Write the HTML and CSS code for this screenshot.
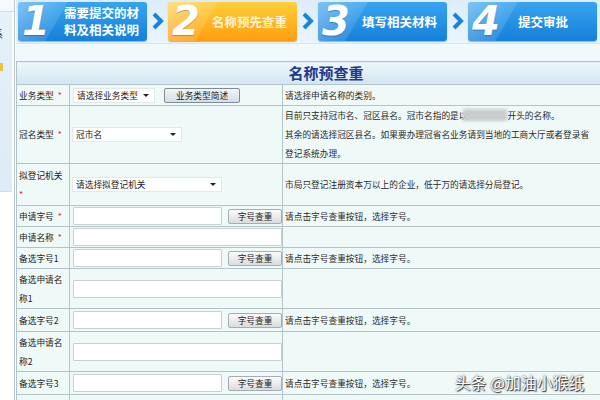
FILE: index.html
```html
<!DOCTYPE html>
<html lang="zh-CN">
<head>
  <meta charset="UTF-8" />
  <title>名称预查重</title>
  <link rel="stylesheet" href="styles.css">
</head>
<body>
  <div class="page">
    <!-- left menu (mostly cut off) -->
    <div class="side">
      <div class="side-top"></div>
      <div class="side-menu">
        <span class="side-text">系</span>
        <span class="side-mark"></span>
      </div>
    </div>

    <div class="main">
      <!-- steps -->
      <div class="steps">
        <div class="step">
          <span class="num">1</span>
          <span class="label two-line">需要提交的材<br>料及相关说明</span>
        </div>
        <svg class="arrow" width="14" height="18" viewBox="0 0 14 18"><polyline points="3,2 10,9 3,16" fill="none" stroke="#1a84da" stroke-width="4"/></svg>
        <div class="step current">
          <span class="num">2</span>
          <span class="label">名称预先查重</span>
        </div>
        <svg class="arrow" width="14" height="18" viewBox="0 0 14 18"><polyline points="3,2 10,9 3,16" fill="none" stroke="#1a84da" stroke-width="4"/></svg>
        <div class="step">
          <span class="num">3</span>
          <span class="label">填写相关材料</span>
        </div>
        <svg class="arrow" width="14" height="18" viewBox="0 0 14 18"><polyline points="3,2 10,9 3,16" fill="none" stroke="#1a84da" stroke-width="4"/></svg>
        <div class="step">
          <span class="num">4</span>
          <span class="label last">提交审批</span>
        </div>
      </div>

      <div class="content">
        <table class="form">
          <colgroup>
            <col class="c-label">
            <col class="c-field">
            <col>
          </colgroup>
          <tr class="title-row">
            <th colspan="3">名称预查重</th>
          </tr>
          <tr class="r-s">
            <td>业务类型 <span class="req">*</span></td>
            <td>
              <div class="field">
                <div class="select sel-type">请选择业务类型<span class="caret"></span></div>
                <button class="btn btn-desc">业务类型简述</button>
              </div>
            </td>
            <td class="hint">请选择申请名称的类别。</td>
          </tr>
          <tr class="r-xl">
            <td>冠名类型 <span class="req">*</span></td>
            <td>
              <div class="field">
                <div class="select sel-crown">冠市名<span class="caret"></span></div>
              </div>
            </td>
            <td class="hint">
              目前只支持冠市名、冠区县名。冠市名指的是以<span class="blur"></span>开头的名称。<br>
              其余的请选择冠区县名。如果要办理冠省名业务请到当地的工商大厅或者登录省<br>
              登记系统办理。
            </td>
          </tr>
          <tr class="r-l">
            <td>拟登记机关<br><span class="req first">*</span></td>
            <td>
              <div class="field">
                <div class="select sel-org">请选择拟登记机关<span class="caret"></span></div>
              </div>
            </td>
            <td class="hint">市局只登记注册资本万以上的企业，低于万的请选择分局登记。</td>
          </tr>
          <tr class="r-s">
            <td>申请字号 <span class="req">*</span></td>
            <td>
              <div class="field">
                <input class="text short" type="text">
                <button class="btn btn-check">字号查重</button>
              </div>
            </td>
            <td class="hint">请点击字号查重按钮，选择字号。</td>
          </tr>
          <tr class="r-s">
            <td>申请名称 <span class="req">*</span></td>
            <td><div class="field"><input class="text long" type="text"></div></td>
            <td class="hint"></td>
          </tr>
          <tr class="r-s">
            <td>备选字号1</td>
            <td>
              <div class="field">
                <input class="text short" type="text">
                <button class="btn btn-check">字号查重</button>
              </div>
            </td>
            <td class="hint">请点击字号查重按钮，选择字号。</td>
          </tr>
          <tr class="r-m">
            <td>备选申请名称1</td>
            <td><div class="field"><input class="text long" type="text"></div></td>
            <td class="hint"></td>
          </tr>
          <tr class="r-s2">
            <td>备选字号2</td>
            <td>
              <div class="field">
                <input class="text short" type="text">
                <button class="btn btn-check">字号查重</button>
              </div>
            </td>
            <td class="hint">请点击字号查重按钮，选择字号。</td>
          </tr>
          <tr class="r-m">
            <td>备选申请名称2</td>
            <td><div class="field"><input class="text long" type="text"></div></td>
            <td class="hint"></td>
          </tr>
          <tr class="r-s2">
            <td>备选字号3</td>
            <td>
              <div class="field">
                <input class="text short" type="text">
                <button class="btn btn-check">字号查重</button>
              </div>
            </td>
            <td class="hint">请点击字号查重按钮，选择字号。</td>
          </tr>
          <tr class="r-m">
            <td>备选申请名称3</td>
            <td><div class="field"><input class="text long" type="text"></div></td>
            <td class="hint"></td>
          </tr>
        </table>
      </div>
    </div>
  </div>

  <div class="watermark">头条 @加油小猴纸</div>
</body>
</html>
```

FILE: styles.css
```css
* {
  box-sizing: border-box;
}

body {
  margin: 0;
  width: 600px;
  height: 400px;
  overflow: hidden;
  background: #fff;
  font-family: "Noto Sans CJK SC", "Noto Sans", sans-serif;
  color: #222;
  position: relative;
}

.page {
  display: flex;
  height: 400px;
}

/* left menu */
.side {
  width: 15px;
  flex: none;
  border-right: 1px solid #b9c6ce;
  margin-right: 1px;
  overflow: hidden;
}

.side-top {
  height: 12px;
  background: #f6fafd;
  border-bottom: 1px solid #cfdde6;
}

.side-menu {
  height: 180px;
  background: linear-gradient(#e6f1f9, #dcebf6);
  border-bottom: 1px solid #cfdde6;
  width: 12px;
  display: flex;
  flex-direction: column;
  padding-top: 14px;
}

.side-text {
  font-size: 10px;
  margin-left: -7px;
  color: #333;
}

.side-mark {
  width: 3px;
  height: 8px;
  margin-top: 22px;
  background: #f0c040;
}

.main {
  flex: 1;
  display: flex;
  flex-direction: column;
  background: #f0f9fb;
}

/* step bar */
.steps {
  display: flex;
  align-items: center;
  height: 44px;
  padding: 2px 0 3px 2px;
  background: linear-gradient(#dcedf9, #e9f5fc);
  border-bottom: 1px solid #d6e7f1;
}

.step {
  position: relative;
  width: 129px;
  height: 39px;
  flex: none;
  display: flex;
  align-items: center;
  border-radius: 3px;
  background: linear-gradient(#38a4ef, #1580d9);
  box-shadow: 0 1px 1px rgba(0, 60, 120, 0.35);
  overflow: hidden;
}

.step::before {
  content: "";
  position: absolute;
  left: 0;
  top: 0;
  width: 60px;
  height: 100%;
  background: linear-gradient(120deg, rgba(255, 255, 255, 0.35) 0%, rgba(255, 255, 255, 0.12) 60%, rgba(255, 255, 255, 0) 61%);
}

.step.current {
  background: linear-gradient(#ffcf3a, #ff9d10);
}

.num {
  position: relative;
  width: 38px;
  flex: none;
  padding-left: 4px;
  font-family: "DejaVu Sans", sans-serif;
  font-weight: bold;
  font-style: italic;
  font-size: 40px;
  line-height: 39px;
  color: #fff;
  text-shadow: 0 1px 1px rgba(0, 40, 90, 0.3);
}

.label {
  flex: 1;
  text-align: center;
  font-size: 12.5px;
  font-weight: bold;
  line-height: 17px;
  color: #fff;
  padding-right: 4px;
}

.two-line {
  padding-left: 4px;
}

.label.last {
  text-align: left;
  padding-left: 12px;
}

.current .label {
  color: #fff3cf;
}

.arrow {
  flex: none;
  margin: 0 3px 0 4px;
}

/* form */
.content {
  padding-top: 17px;
}

.form {
  width: 616px;
  table-layout: fixed;
  border-collapse: collapse;
  background: #eff9f8;
  font-size: 8.7px;
  line-height: 19px;
}

.c-label {
  width: 53px;
}

.c-field {
  width: 213px;
}

.form th,
.form td {
  border: 1px solid #b3c4c8;
  padding: 0 2px;
  vertical-align: middle;
  text-align: left;
  font-weight: normal;
}

.title-row th {
  height: 23px;
  text-align: center;
  font-size: 15px;
  font-weight: bold;
  color: #22388c;
  background: linear-gradient(#eef6fb, #d3e6f3);
  padding-left: 6px;
  line-height: 20px;
}

.r-s { height: 21px; }
.r-s2 { height: 23px; }
.r-m { height: 40px; }
.r-l { height: 42px; }
.r-xl { height: 58px; }

.req {
  color: #e0242a;
  margin-left: 2px;
}

.req.first {
  margin-left: 0;
}

.hint {
  padding-left: 3px;
  color: #2a2a2a;
}

.blur {
  display: inline-block;
  width: 44px;
  height: 12px;
  margin-left: -4px;
  vertical-align: -2px;
  background: #c9cdce;
  filter: blur(1.5px);
}

.field {
  display: flex;
  align-items: center;
  white-space: nowrap;
}

.select {
  display: flex;
  align-items: center;
  justify-content: space-between;
  height: 15px;
  padding: 0 5px 0 3px;
  background: #fff;
  border: 1px solid #e4e8ea;
  font-size: 8.7px;
  color: #222;
}

.caret {
  width: 0;
  height: 0;
  border-left: 3px solid transparent;
  border-right: 3px solid transparent;
  border-top: 3px solid #222;
}

.sel-type {
  width: 82px;
  margin-left: 1px;
}

.sel-crown {
  width: 110px;
}

.sel-org {
  width: 150px;
}

.btn {
  flex: none;
  height: 15px;
  padding: 0;
  border: 1px solid #7f8c98;
  border-radius: 2px;
  background: linear-gradient(#fbfbfb, #d9dcde);
  font-family: inherit;
  font-size: 8.7px;
  line-height: 13px;
  color: #222;
}

.btn-desc {
  width: 76px;
  margin-left: 9px;
  background: linear-gradient(#f2f5f8, #d6dde5);
}

.btn-check {
  width: 54px;
  margin-left: 6px;
  border-color: #a6adb3;
}

.text {
  flex: none;
  height: 18px;
  border: 1px solid #c9d0d3;
  border-radius: 1px;
  background: #fff;
  margin: 0 0 0 1px;
  padding: 0;
}

.text.short {
  width: 149px;
}

.text.long {
  width: 209px;
}

/* watermark over the page */
.watermark {
  position: absolute;
  left: 455px;
  top: 371px;
  font-size: 15.5px;
  color: #fff;
  letter-spacing: 0.3px;
  text-shadow: 0 0 2px #333, 1px 1px 1px #333;
}
```
